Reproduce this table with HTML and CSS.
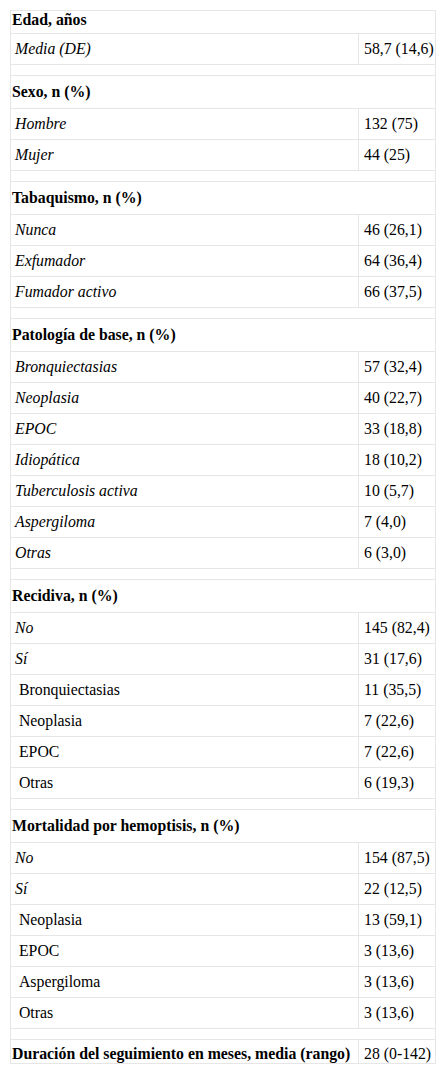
FILE: index.html
```html
<!DOCTYPE html>
<html lang="es">
<head>
<meta charset="utf-8">
<link rel="stylesheet" href="styles.css">
</head>
<body>
<div class="page">
<table class="tbl">
  <colgroup><col class="c1"><col class="c2"></colgroup>
  <tr class="head first"><td colspan="2">Edad, años</td></tr>
  <tr class="row"><td class="lab"><i>Media (DE)</i></td><td class="val">58,7 (14,6)</td></tr>
  <tr class="gap"><td colspan="2"></td></tr>

  <tr class="head"><td colspan="2">Sexo, n (%)</td></tr>
  <tr class="row"><td class="lab"><i>Hombre</i></td><td class="val">132 (75)</td></tr>
  <tr class="row"><td class="lab"><i>Mujer</i></td><td class="val">44 (25)</td></tr>
  <tr class="gap"><td colspan="2"></td></tr>

  <tr class="head"><td colspan="2">Tabaquismo, n (%)</td></tr>
  <tr class="row"><td class="lab"><i>Nunca</i></td><td class="val">46 (26,1)</td></tr>
  <tr class="row"><td class="lab"><i>Exfumador</i></td><td class="val">64 (36,4)</td></tr>
  <tr class="row"><td class="lab"><i>Fumador activo</i></td><td class="val">66 (37,5)</td></tr>
  <tr class="gap"><td colspan="2"></td></tr>

  <tr class="head"><td colspan="2">Patología de base, n (%)</td></tr>
  <tr class="row"><td class="lab"><i>Bronquiectasias</i></td><td class="val">57 (32,4)</td></tr>
  <tr class="row"><td class="lab"><i>Neoplasia</i></td><td class="val">40 (22,7)</td></tr>
  <tr class="row"><td class="lab"><i>EPOC</i></td><td class="val">33 (18,8)</td></tr>
  <tr class="row"><td class="lab"><i>Idiopática</i></td><td class="val">18 (10,2)</td></tr>
  <tr class="row"><td class="lab"><i>Tuberculosis activa</i></td><td class="val">10 (5,7)</td></tr>
  <tr class="row"><td class="lab"><i>Aspergiloma</i></td><td class="val">7 (4,0)</td></tr>
  <tr class="row"><td class="lab"><i>Otras</i></td><td class="val">6 (3,0)</td></tr>
  <tr class="gap"><td colspan="2"></td></tr>

  <tr class="head"><td colspan="2">Recidiva, n (%)</td></tr>
  <tr class="row"><td class="lab"><i>No</i></td><td class="val">145 (82,4)</td></tr>
  <tr class="row"><td class="lab"><i>Sí</i></td><td class="val">31 (17,6)</td></tr>
  <tr class="row"><td class="lab">&nbsp;Bronquiectasias</td><td class="val">11 (35,5)</td></tr>
  <tr class="row"><td class="lab">&nbsp;Neoplasia</td><td class="val">7 (22,6)</td></tr>
  <tr class="row"><td class="lab">&nbsp;EPOC</td><td class="val">7 (22,6)</td></tr>
  <tr class="row"><td class="lab">&nbsp;Otras</td><td class="val">6 (19,3)</td></tr>
  <tr class="gap"><td colspan="2"></td></tr>

  <tr class="head"><td colspan="2">Mortalidad por hemoptisis, n (%)</td></tr>
  <tr class="row"><td class="lab"><i>No</i></td><td class="val">154 (87,5)</td></tr>
  <tr class="row"><td class="lab"><i>Sí</i></td><td class="val">22 (12,5)</td></tr>
  <tr class="row"><td class="lab">&nbsp;Neoplasia</td><td class="val">13 (59,1)</td></tr>
  <tr class="row"><td class="lab">&nbsp;EPOC</td><td class="val">3 (13,6)</td></tr>
  <tr class="row"><td class="lab">&nbsp;Aspergiloma</td><td class="val">3 (13,6)</td></tr>
  <tr class="row"><td class="lab">&nbsp;Otras</td><td class="val">3 (13,6)</td></tr>
  <tr class="gap"><td colspan="2"></td></tr>

  <tr class="last"><td class="lab">Duración del seguimiento en meses, media (rango)</td><td class="val">28 (0-142)</td></tr>
</table>
</div>
</body>
</html>
```

FILE: styles.css
```css
html, body {
  margin: 0;
  padding: 0;
  background: #ffffff;
}

.page {
  padding: 10px 0 0 10px;
}

.tbl {
  border-collapse: collapse;
  width: 425px;
  table-layout: fixed;
  font-family: "Liberation Serif", "Times New Roman", serif;
  font-size: 15.8px;
  color: #000000;
}

.c1 {
  width: 348px;
}

.c2 {
  width: 77px;
}

.tbl td {
  border: 1px solid #e6e6e6;
  padding: 0;
}

.tbl .val {
  padding: 0 0 0 5px;
  white-space: nowrap;
}

.row td {
  height: 30px;
  line-height: 18px;
  vertical-align: middle;
}

.row .lab {
  padding-left: 4px;
}

.head td {
  height: 32px;
  padding: 0 0 0 1px;
  font-weight: bold;
  line-height: 18px;
  vertical-align: middle;
}

.head.first td {
  height: 22px;
  vertical-align: top;
  padding-top: 0;
}

.gap td {
  height: 10px;
}

.last td {
  height: 23px;
  vertical-align: bottom;
  line-height: 18px;
}

.last .lab {
  padding-left: 1px;
  font-weight: bold;
  white-space: nowrap;
}
```
